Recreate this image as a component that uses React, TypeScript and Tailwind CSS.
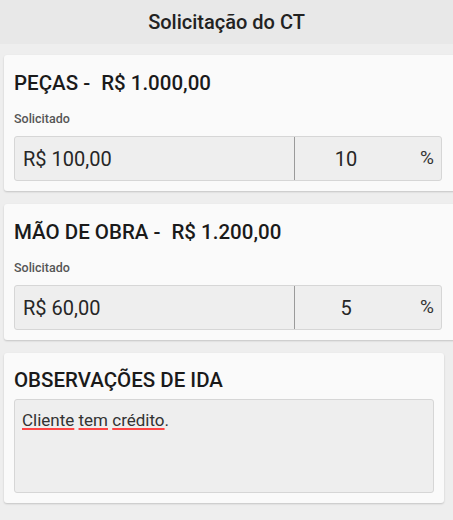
import React from "react";

function MoneyCard({ title, value, amount, pct }: { title: string; value: string; amount: string; pct: string }) {
  return (
    <div className="ml-[4px] mr-[-4px] rounded-[3px] bg-[#fafafa] shadow-[0_1px_2px_rgba(0,0,0,0.18)] px-[10px] pt-[17px] pb-[10px]">
      <div className="flex items-center text-[20.5px] font-medium text-[#1a1a1a] leading-[22px] h-[22px]">
        <span>{title} -</span>
        <span className="ml-[11px]">{value}</span>
      </div>
      <div className="mt-[18px] text-[12.5px] font-medium text-[#555] leading-[14px]">Solicitado</div>
      <div className="mt-[10px] flex h-[45px] w-[428px] rounded-[3px] bg-[#eeeeee] border border-[#d6d6d6]">
        <div className="w-[280px] border-r border-[#9a9a9a] flex items-center pl-[8px] text-[20px] text-[#262626]">{amount}</div>
        <div className="flex-1 flex items-center text-[20px] text-[#262626]">
          <span className="w-[102px] text-center">{pct}</span>
          <span className="ml-auto mr-[7px] text-[19px] text-[#333]">%</span>
        </div>
      </div>
    </div>
  );
}

export default function App() {
  return (
    <div className="w-[453px] h-[520px] bg-[#eeeeee] overflow-hidden" style={{ fontFamily: "Roboto, 'Noto Sans', sans-serif" }}>
      <div className="h-[44px] bg-[#e8e8e8] flex items-center justify-center text-[20px] font-medium text-[#222]">
        Solicitação do CT
      </div>
      <div className="pt-[11px] flex flex-col gap-[13px]">
        <MoneyCard title="PEÇAS" value="R$ 1.000,00" amount="R$ 100,00" pct="10" />
        <MoneyCard title="MÃO DE OBRA" value="R$ 1.200,00" amount="R$ 60,00" pct="5" />
        <div className="ml-[4px] w-[440px] rounded-[3px] bg-[#fafafa] shadow-[0_1px_2px_rgba(0,0,0,0.18)] px-[10px] pt-[16px] pb-[10px]">
          <div className="text-[20.5px] font-medium text-[#1a1a1a] leading-[22px]">OBSERVAÇÕES DE IDA</div>
          <div className="mt-[8px] h-[94px] rounded-[3px] bg-[#eeeeee] border border-[#d6d6d6] px-[7px] pt-[10px] text-[17px] text-[#333] leading-[20px]">
            <span className="underline decoration-[#ff4444] decoration-2 underline-offset-[2px]">Cliente</span>{" "}
            <span className="underline decoration-[#ff4444] decoration-2 underline-offset-[2px]">tem</span>{" "}
            <span className="underline decoration-[#ff4444] decoration-2 underline-offset-[2px]">crédito</span>.
          </div>
        </div>
      </div>
    </div>
  );
}
